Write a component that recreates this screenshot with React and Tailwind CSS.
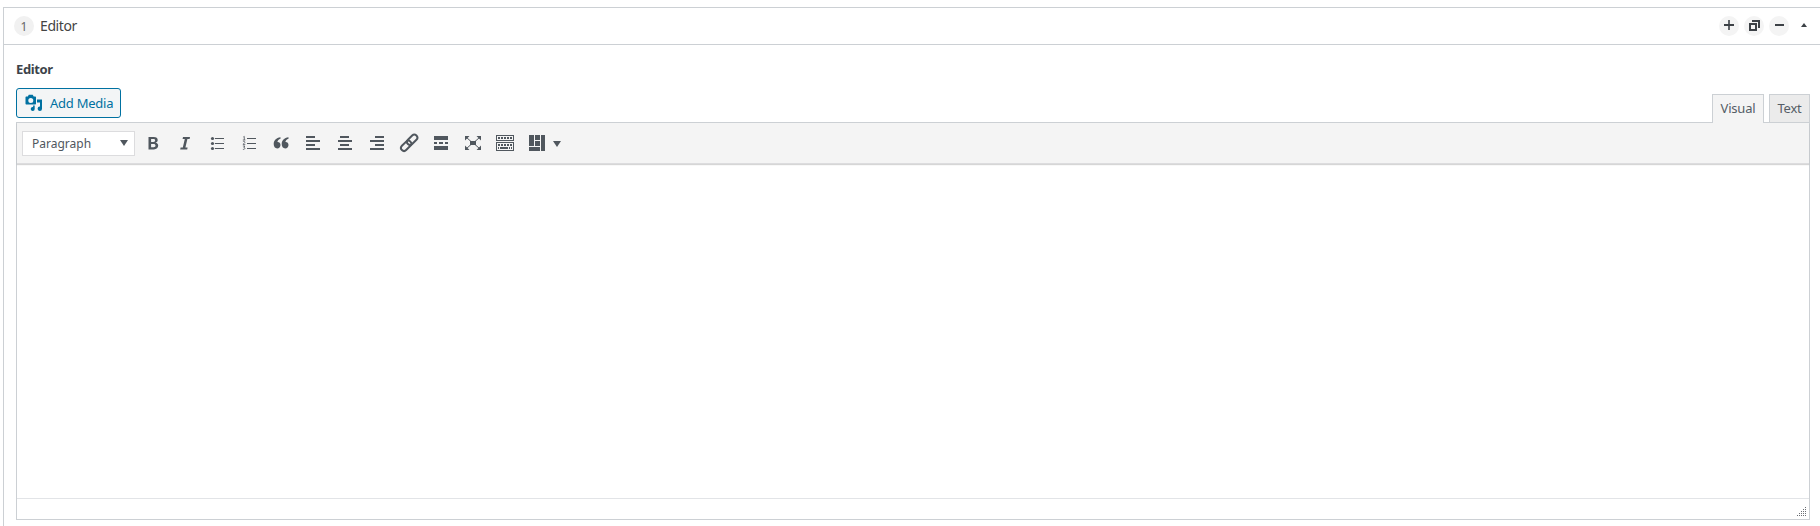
import React from "react";

const Icon = ({ children, crisp = true }) => (
  <svg
    width="20"
    height="20"
    viewBox="0 0 20 20"
    fill="currentColor"
    shapeRendering={crisp ? "crispEdges" : "auto"}
    className="block shrink-0"
  >
    {children}
  </svg>
);

const Tool = ({ children, label }) => (
  <button aria-label={label} className="flex h-7 w-8 shrink-0 items-center justify-center text-[#50575e]">
    {children}
  </button>
);

const Circle = ({ children, label }) => (
  <button aria-label={label} className="flex size-5 items-center justify-center rounded-full bg-[#f4f4f4] text-[#3c4146]">
    {children}
  </button>
);

const Bold = () => (
  <Icon crisp={false}>
    <path fillRule="evenodd" d="M5.500 4h5.200c2.800 0 4 1.100 4 3 0 1.400-.8 2.300-2 2.600v.1c1.500.3 2.500 1.200 2.500 2.900 0 2.200-1.600 3.900-4.300 3.900H5.500zM8.100 8.900h2.200c1.200 0 1.800-.4 1.800-1.400s-.7-1.400-1.900-1.400H8.100zm0 5.400h2.500c1.300 0 1.900-.6 1.900-1.700 0-1-.7-1.600-2-1.600H8.100z" />
  </Icon>
);

const Italic = () => (
  <Icon crisp={false}>
    <path d="M8 4h7l-.4 1.900h-2.200L10.400 14.600h2.200L12.200 16.500h-7l.4-1.900h2.200L9.800 5.900H7.600z" />
  </Icon>
);

const Bullets = () => (
  <Icon>
    <path d="M8 5h9v1H8zM8 10h9v1H8zM8 15h9v1H8z" />
    <g shapeRendering="auto">
      <circle cx="5.500" cy="5.500" r="1.600" />
      <circle cx="5.500" cy="10.500" r="1.600" />
      <circle cx="5.500" cy="15.500" r="1.600" />
    </g>
  </Icon>
);

const Numbers = () => (
  <Icon>
    <path d="M8 5h9v1H8zM8 10h9v1H8zM8 15h9v1H8z" />
    <g fill="none" stroke="currentColor" strokeWidth=".8" shapeRendering="auto">
      <path d="M4.300 4l1-.6V7M3.800 7h2.600" />
      <path d="M3.900 8.700c.8-.7 2-.4 2 .5 0 .7-1 1.300-2 2.200h2.400" />
      <path d="M3.900 13h2L4.800 14.400c1.600-.1 1.700 2.300-.9 2" />
    </g>
  </Icon>
);

const Quote = () => (
  <Icon crisp={false}>
    <path d="M9.500 4.200v1.500C7.700 6.300 6.600 7.400 6.400 9c1.700-.2 3.100 1.100 3.100 3 0 2-1.400 3.400-3.300 3.400-2.200 0-3.500-1.800-3.500-4.400 0-3.700 2.500-6.300 6.800-6.800zM17.500 4.200v1.500c-1.800.6-2.900 1.700-3.100 3.300 1.700-.2 3.100 1.100 3.100 3 0 2-1.400 3.400-3.300 3.400-2.200 0-3.500-1.800-3.500-4.400 0-3.700 2.500-6.300 6.800-6.800z" />
  </Icon>
);

const AlignLeft = () => (
  <Icon>
    <path d="M3 3h9v2H3zM3 7h14v2H3zM3 11h9v2H3zM3 15h14v2H3z" />
  </Icon>
);
const AlignCenter = () => (
  <Icon>
    <path d="M5 3h9v2H5zM3 7h14v2H3zM5 11h9v2H5zM3 15h14v2H3z" />
  </Icon>
);
const AlignRight = () => (
  <Icon>
    <path d="M8 3h9v2H8zM3 7h14v2H3zM8 11h9v2H8zM3 15h14v2H3z" />
  </Icon>
);

const LinkIcon = () => (
  <Icon crisp={false}>
    <g fill="none" stroke="currentColor" strokeWidth="2" transform="rotate(-45 10 10)">
      <rect x="0" y="7" width="12" height="6" rx="3" />
      <rect x="8.500" y="7" width="12" height="6" rx="3" />
    </g>
  </Icon>
);

const More = () => (
  <Icon>
    <path d="M3 3h14v4H3zM3 9h3v2H3zM8 9h4v2H8zM14 9h3v2h-3zM3 13h14v4H3z" />
  </Icon>
);

const Expand = () => (
  <Icon crisp={false}>
    <path d="M7 8h6v4H7zM2 3h4.500L2 7.500zM18 3h-4.500L18 7.500zM2 17h4.500L2 12.500zM18 17h-4.500l4.500-4.500z" />
    <path d="M3 4l5 4.500M17 4l-5 4.500M3 16l5-4.500M17 16l-5-4.500" fill="none" stroke="currentColor" strokeWidth="1" />
  </Icon>
);

const Keyboard = () => (
  <Icon>
    <path fillRule="evenodd" d="M1 2h18v6H1zM2 3v4h16V3zM1 9h18v9H1zM2 10v7h16v-7z" />
    <path d="M3 4h2v2H3zM6 4h2v2H6zM9 4h2v2H9zM12 4h2v2h-2zM15 4h2v2h-2zM3 11h2v2H3zM6 11h2v2H6zM9 11h2v2H9zM12 11h2v2h-2zM15 11h2v2h-2zM3 14h1v2H3zM5 14h8v2H5zM14 14h1v2h-1zM16 14h1v2h-1z" />
  </Icon>
);

const Blocks = () => (
  <Icon>
    <path d="M2 2h5v11H2zM8 2h5v5H8zM8 8h5v5H8zM14 2h4v16h-4zM2 14h11v4H2z" />
  </Icon>
);

const Media = () => (
  <svg width="18" height="18" viewBox="0 0 18 18" fill="currentColor" className="block">
    <path fillRule="evenodd" d="M1.500 2.500h1.300l1-1.700h3.900l1 1.700h1.300c.6 0 1 .4 1 1v6c0 .6-.4 1-1 1H1.500c-.6 0-1-.4-1-1v-6c0-.6.4-1 1-1zM5.800 4a2.500 2.500 0 1 0 0 5 2.500 2.500 0 0 0 0-5z" />
    <path d="M12 5.500h5v9.200a2.200 2.200 0 1 1-2-2.200V8.500h-3z" />
    <path d="M9.700 11.500v3.600a2 2 0 1 1-1.600-2v-1.600z" />
  </svg>
);

const TABS = [
  { name: "Visual", style: "w-[52px] bg-[#f4f4f4] -mb-px h-[29px]" },
  { name: "Text", style: "w-[41px] bg-[#ebebeb] h-7" },
];

export default function App() {
  return (
    <div className="h-[526px] w-full overflow-hidden bg-white pl-[3px] pt-[7px] font-['Noto_Sans','Open_Sans',sans-serif] text-[13px] text-[#3c434a]">
      <section className="h-[540px] border-l border-t border-[#ccd0d4]">
        <header className="flex h-[37px] items-center border-b border-[#ccd0d4] pl-2.5 pr-[13px]">
          <span className="flex size-5 items-center justify-center rounded-full bg-[#f1f1f1] pt-px text-xs text-[#666]">1</span>
          <h2 className="ml-1.5 text-[14px] leading-5 tracking-[-0.4px] text-[#444]">Editor</h2>
          <div className="ml-auto flex items-center gap-[5px]">
            <Circle label="Add">
              <svg width="10" height="10" viewBox="0 0 10 10" className="-mt-0.5" fill="currentColor">
                <path d="M0 4h10v2H0zM4.200 0h1.600v10H4.200z" />
              </svg>
            </Circle>
            <Circle label="Duplicate">
              <svg width="12" height="12" viewBox="0 0 12 12" fill="none" stroke="currentColor" strokeWidth="2" shapeRendering="crispEdges">
                <path d="M2 4h6v6H2zM4 1h7v7" />
              </svg>
            </Circle>
            <Circle label="Remove">
              <svg width="9" height="2" viewBox="0 0 9 2" className="-mt-0.5" fill="currentColor" shapeRendering="crispEdges">
                <path d="M0 0h9v2H0z" />
              </svg>
            </Circle>
            <svg width="6" height="4" viewBox="0 0 6 4" fill="#3c4146" className="-mt-0.5 ml-[7px]">
              <path d="M3 0l3 4H0z" />
            </svg>
          </div>
        </header>

        <div className="pl-3 pr-2.5">
          <div className="h-[43px] pt-[15px] text-[13px] font-bold leading-[18px] tracking-[-0.4px]">Editor</div>

          <div className="flex h-[34px] justify-between">
            <button className="flex h-[30px] w-[105px] items-center rounded-[3px] border border-[#0071a1] bg-[#f3f5f6] pl-2 text-[#0071a1]">
              <Media />
              <span className="ml-[7px] whitespace-nowrap pt-0.5 text-[13px] tracking-[-0.25px]">Add Media</span>
            </button>
            <div className="mt-1.5 flex gap-[5px]">
              {TABS.map((tab) => (
                <button key={tab.name} className={`relative z-10 border border-b-0 border-[#ccd0d4] text-[13px] tracking-[-0.2px] text-[#555d66] ${tab.style}`}>
                  {tab.name}
                </button>
              ))}
            </div>
          </div>

          <div className="flex h-[398px] flex-col border border-[#ccd0d4]">
            <div className="flex h-[41px] shrink-0 items-center border-b border-[#dcdcde] bg-[#f4f4f4] pl-[5px] shadow-[0_1px_1px_rgba(0,0,0,0.16)]">
              <button className="mr-0.5 flex h-[25px] w-[113px] items-center justify-between border border-[#dcdcde] bg-white pl-[9px] pr-1.5 text-xs text-[#50575e]">
                <span className="pt-px">Paragraph</span>
                <svg width="8" height="6" viewBox="0 0 8 6" fill="currentColor">
                  <path d="M0 0h8L4 6z" />
                </svg>
              </button>
              <Tool label="Bold"><Bold /></Tool>
              <Tool label="Italic"><Italic /></Tool>
              <Tool label="Bulleted list"><Bullets /></Tool>
              <Tool label="Numbered list"><Numbers /></Tool>
              <Tool label="Blockquote"><Quote /></Tool>
              <Tool label="Align left"><AlignLeft /></Tool>
              <Tool label="Align center"><AlignCenter /></Tool>
              <Tool label="Align right"><AlignRight /></Tool>
              <Tool label="Link"><LinkIcon /></Tool>
              <Tool label="Read more"><More /></Tool>
              <Tool label="Fullscreen"><Expand /></Tool>
              <Tool label="Toolbar toggle"><Keyboard /></Tool>
              <Tool label="Layouts"><Blocks /></Tool>
              <svg width="8" height="6" viewBox="0 0 8 6" fill="#50575e" className="mt-px">
                <path d="M0 0h8L4 6z" />
              </svg>
            </div>
            <div className="grow" />
            <div className="flex h-[21px] shrink-0 items-end justify-end border-t border-[#e2e4e7] pb-0.5 pr-0.5">
              <svg width="10" height="10" viewBox="0 0 10 10" fill="#6c6f74" shapeRendering="crispEdges">
                <path d="M8 0h1v1H8zM6 2h1v1H6zM8 2h1v1H8zM4 4h1v1H4zM6 4h1v1H6zM8 4h1v1H8zM2 6h1v1H2zM4 6h1v1H4zM6 6h1v1H6zM8 6h1v1H8zM0 8h1v1H0zM2 8h1v1H2zM4 8h1v1H4zM6 8h1v1H6zM8 8h1v1H8z" />
              </svg>
            </div>
          </div>
        </div>
      </section>
    </div>
  );
}
